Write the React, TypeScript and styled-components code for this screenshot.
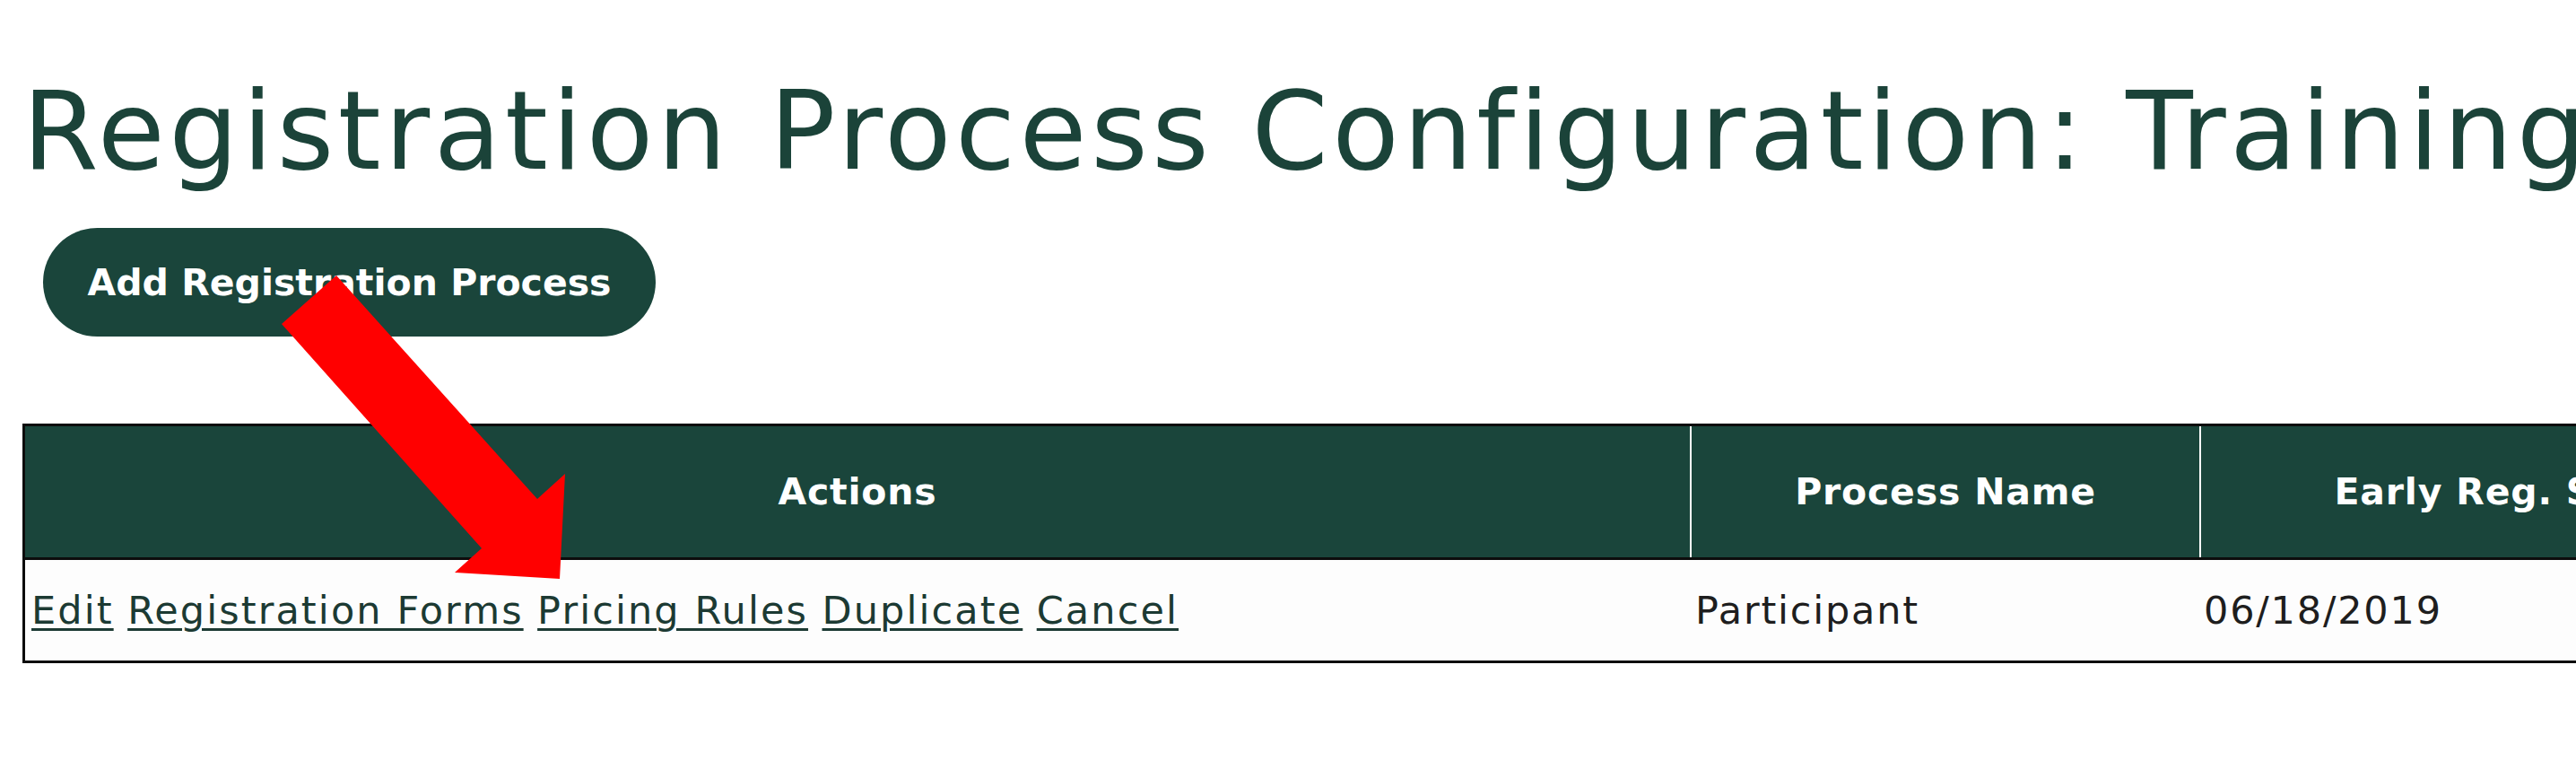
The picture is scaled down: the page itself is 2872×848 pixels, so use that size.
import styled, { createGlobalStyle } from 'styled-components';

const GlobalStyle = createGlobalStyle`
    html, body {
        margin: 0;
        padding: 0;
        background: #ffffff;
    }
    body {
        width: 2872px;
        height: 848px;
        overflow: hidden;
        font-family: "DejaVu Sans", "Liberation Sans", sans-serif;
    }
`;

// Page Styling Component
const Page = styled.div`
    position: relative;
    width: 2872px;
    height: 848px;
    overflow: hidden;
    padding: 0 0 0 25px;
    box-sizing: border-box;
`;

// Title Styling Component
const Title = styled.h1`
    margin: 0;
    padding: 76px 0 0 0;
    font-size: 122px;
    line-height: 140px;
    font-weight: normal;
    letter-spacing: 4.5px;
    color: #1b4339;
    white-space: nowrap;
`;

// Button Styling Component
const AddButton = styled.button`
    display: flex;
    align-items: center;
    justify-content: center;
    margin: 38px 0 0 23px;
    width: 683px;
    height: 121px;
    padding: 0;
    border: none;
    border-radius: 61px;
    background: #1a453b;
    color: #ffffff;
    font-family: "DejaVu Sans", "Liberation Sans", sans-serif;
    font-size: 41px;
    font-weight: bold;
    cursor: pointer;
`;

// Table Styling Component
const Table = styled.table<{ $width: number }>`
    width: ${(p) => p.$width}px;
    margin-top: 97px;
    border-collapse: collapse;
    table-layout: fixed;
    border: 3px solid #0c0c0c;
    background: #fdfdfd;
`;

// HeaderCell Styling Component
const HeaderCell = styled.th<{ $width: number }>`
    width: ${(p) => p.$width}px;
    height: 146px;
    padding: 0;
    background: #1a453b;
    color: #ffffff;
    font-size: 41px;
    font-weight: bold;
    letter-spacing: 0.8px;
    text-align: center;
    white-space: nowrap;
    border-left: 2px solid #ffffff;
    border-bottom: 3px solid #0c0c0c;
    &:first-child {
        border-left: none;
    }
`;

// BodyCell Styling Component
const BodyCell = styled.td<{ $pad: number }>`
    height: 112px;
    padding: 0 0 0 ${(p) => p.$pad}px;
    font-size: 43px;
    letter-spacing: 1.8px;
    color: #1e1e1e;
    white-space: nowrap;
    vertical-align: middle;
`;

// ActionLink Styling Component
const ActionLink = styled.a`
    color: #1c3a33;
    letter-spacing: 2.1px;
    text-decoration: underline;
    text-decoration-thickness: 3px;
    text-underline-offset: 5px;
    cursor: pointer;
`;

// Arrow Styling Component
const Arrow = styled.svg`
    position: absolute;
    top: 0;
    left: 0;
    pointer-events: none;
`;

const columns = [
    { label: 'Actions', width: 1856 },
    { label: 'Process Name', width: 566 },
    { label: 'Early Reg. Start', width: 676 },
];

const actions = ['Edit', 'Registration Forms', 'Pricing Rules', 'Duplicate', 'Cancel'];

const App = () => {
    const tableWidth = columns.reduce((sum, c) => sum + c.width, 0);

    return (
        <Page>
            <GlobalStyle />
            <Title>Registration Process Configuration: Training</Title>
            <AddButton>Add Registration Process</AddButton>
            <Table $width={tableWidth}>
                <thead>
                    <tr>
                        {columns.map((c) => (
                            <HeaderCell key={c.label} $width={c.width}>{c.label}</HeaderCell>
                        ))}
                    </tr>
                </thead>
                <tbody>
                    <tr>
                        <BodyCell $pad={7}>
                            {actions.map((label, i) => (
                                <span key={label}>
                                    <ActionLink>{label}</ActionLink>
                                    {i < actions.length - 1 ? ' ' : ''}
                                </span>
                            ))}
                        </BodyCell>
                        <BodyCell $pad={5}>Participant</BodyCell>
                        <BodyCell $pad={4}>06/18/2019</BodyCell>
                    </tr>
                </tbody>
            </Table>
            {/* Red annotation arrow over the page */}
            <Arrow width="2872" height="848" viewBox="0 0 2872 848">
                <polygon
                    points="375,307 599,556 630,528 624,645 507,638 537,611 314,361"
                    fill="#ff0000"
                />
            </Arrow>
        </Page>
    );
};

export default App;
